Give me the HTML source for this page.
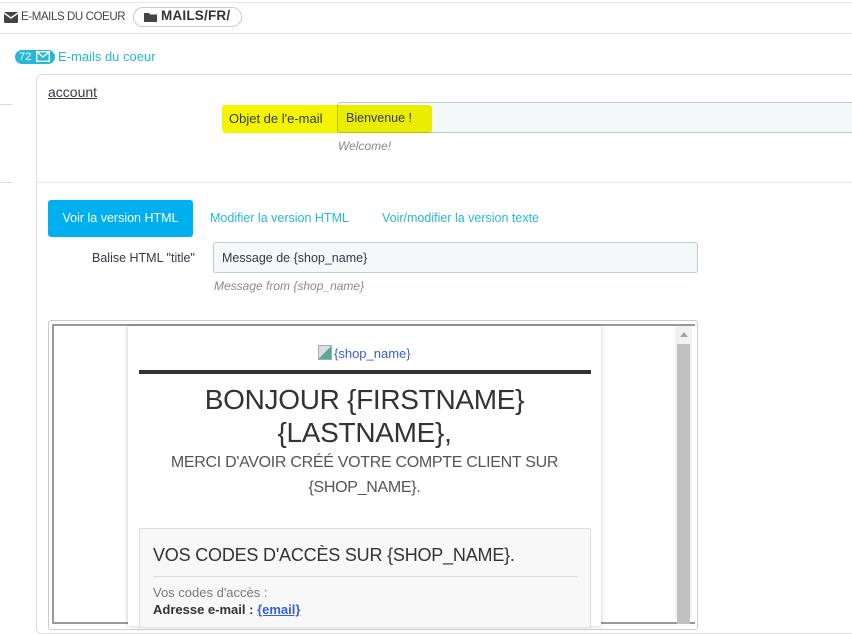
<!DOCTYPE html>
<html><head><meta charset="utf-8"><style>
*{box-sizing:border-box;margin:0;padding:0}
body{width:852px;height:618px;overflow:hidden;background:#fff;font-family:"Liberation Sans",sans-serif;position:relative;color:#363a41}
.a{position:absolute}
</style></head><body>
<div class="a" style="left:0;top:2px;width:852px;height:1px;background:#e8e8e8"></div>
<div class="a" style="left:0;top:33px;width:852px;height:1px;background:#e4e4e4"></div>
<div class="a" style="left:0;top:104px;width:12px;height:1px;background:#ddd"></div>
<div class="a" style="left:0;top:182px;width:12px;height:1px;background:#ddd"></div>
<svg class="a" style="left:4px;top:12px" width="14" height="11" viewBox="0 0 14 11"><rect width="14" height="11" rx="1" fill="#444"/><path d="M0 1 L7 6 L14 1" stroke="#fff" stroke-width="1.4" fill="none"/></svg>
<div class="a" style="left:21px;top:11px;font-size:11.5px;color:#444;letter-spacing:-0.4px;white-space:nowrap">E-MAILS DU COEUR</div>
<div class="a" style="left:133px;top:7px;width:109px;height:20px;border:1px solid #ccc;border-radius:10px"></div>
<svg class="a" style="left:144px;top:12px" width="13" height="10" viewBox="0 0 13 10"><path d="M0 1h5l1 1.5h7V10H0z" fill="#444"/></svg>
<div class="a" style="left:161px;top:8px;font-size:13.5px;font-weight:bold;color:#333;letter-spacing:0.2px">MAILS/FR/</div>
<div class="a" style="left:15px;top:50px;width:40px;height:14px;border-radius:7px;background:#25b9d7"></div>
<div class="a" style="left:19px;top:51px;font-size:11px;color:#fff">72</div>
<svg class="a" style="left:36px;top:51px" width="14" height="11" viewBox="0 0 14 11"><rect x="0.7" y="0.7" width="12.6" height="9.6" fill="none" stroke="#fff" stroke-width="1.4"/><path d="M1 1 L7 6 L13 1" stroke="#fff" stroke-width="1.4" fill="none"/></svg>
<div class="a" style="left:58px;top:49px;font-size:13px;color:#25b9d7">E-mails du coeur</div>
<div class="a" style="left:36px;top:74px;width:830px;height:560px;border:1px solid #dcdcdc;border-radius:5px"></div>
<div class="a" style="left:48px;top:84px;font-size:14px;text-decoration:underline;color:#363a41">account</div>
<div class="a" style="left:337px;top:102px;width:520px;height:31px;background:#f5f8f9;border:1px solid #bbcdd2;border-radius:3px"></div>
<div class="a" style="left:222px;top:105px;width:210px;height:28px;background:#f4f400;mix-blend-mode:multiply;border-radius:3px"></div>
<div class="a" style="left:229px;top:111px;font-size:13px;color:#363a41">Objet de l'e-mail</div>
<div class="a" style="left:346px;top:111px;font-size:12.5px;color:#363a41">Bienvenue !</div>
<div class="a" style="left:338px;top:139px;font-size:12px;font-style:italic;color:#8a8a8a">Welcome!</div>
<div class="a" style="left:37px;top:182px;width:815px;height:1px;background:#e6e6e6"></div>
<div class="a" style="left:48px;top:200px;width:145px;height:37px;background:#00aff0;border-radius:3px;color:#fff;font-size:12.5px;line-height:37px;text-align:center">Voir la version HTML</div>
<div class="a" style="left:210px;top:211px;font-size:12.5px;color:#25b9d7">Modifier la version HTML</div>
<div class="a" style="left:382px;top:211px;font-size:12.5px;color:#25b9d7">Voir/modifier la version texte</div>
<div class="a" style="left:92px;top:251px;font-size:12.5px;color:#363a41">Balise HTML "title"</div>
<div class="a" style="left:213px;top:242px;width:485px;height:31px;background:#f5f8f9;border:1px solid #bbcdd2;border-radius:3px"></div>
<div class="a" style="left:222px;top:251px;font-size:12.5px;color:#363a41">Message de {shop_name}</div>
<div class="a" style="left:214px;top:279px;font-size:12px;font-style:italic;color:#8a8a8a">Message from {shop_name}</div>
<div class="a" style="left:48px;top:320px;width:650px;height:310px;border:1px solid #ccc;border-radius:3px"></div>
<div class="a" style="left:52px;top:324px;width:643px;height:300px;border:2px solid #999;border-right:none;background:#fff"></div>
<div class="a" style="left:675px;top:326px;width:17px;height:292px;background:#f1f1f1"></div>
<div class="a" style="left:677px;top:344px;width:13px;height:280px;background:#c1c1c1"></div>
<div class="a" style="left:680px;top:332px;width:0;height:0;border-left:4px solid transparent;border-right:4px solid transparent;border-bottom:5px solid #a3a3a3"></div>
<div class="a" style="left:128px;top:326px;width:473px;height:300px;background:#fff;box-shadow:0 0 4px rgba(0,0,0,.25)"></div>
<div class="a" style="left:318px;top:345px;width:14px;height:15px;background:linear-gradient(135deg,#ddd 50%,#5a9 50%);border:1px solid #aaa"></div>
<div class="a" style="left:334px;top:346px;font-size:13px;color:#3a5ed8">{shop_name}</div>
<div class="a" style="left:139px;top:370px;width:452px;height:4px;background:#333"></div>
<div class="a" style="left:128px;top:383px;width:473px;text-align:center;font-size:28px;line-height:33px;color:#333;letter-spacing:-0.3px">BONJOUR {FIRSTNAME}<br>{LASTNAME},</div>
<div class="a" style="left:128px;top:450px;width:473px;text-align:center;font-size:16px;line-height:25px;color:#555;letter-spacing:-0.3px">MERCI D'AVOIR CRÉÉ VOTRE COMPTE CLIENT SUR<br>{SHOP_NAME}.</div>
<div class="a" style="left:139px;top:528px;width:452px;height:100px;background:#f8f8f8;border:1px solid #ddd"></div>
<div class="a" style="left:153px;top:545px;font-size:18px;color:#333;letter-spacing:-0.2px">VOS CODES D'ACCÈS SUR {SHOP_NAME}.</div>
<div class="a" style="left:153px;top:576px;width:424px;height:1px;background:#ddd"></div>
<div class="a" style="left:153px;top:585px;font-size:13px;color:#777">Vos codes d'accès :</div>
<div class="a" style="left:153px;top:602px;font-size:13px;color:#333"><b>Adresse e-mail :</b> <b style="color:#3a5ed8;text-decoration:underline">{email}</b></div>
</body></html>
